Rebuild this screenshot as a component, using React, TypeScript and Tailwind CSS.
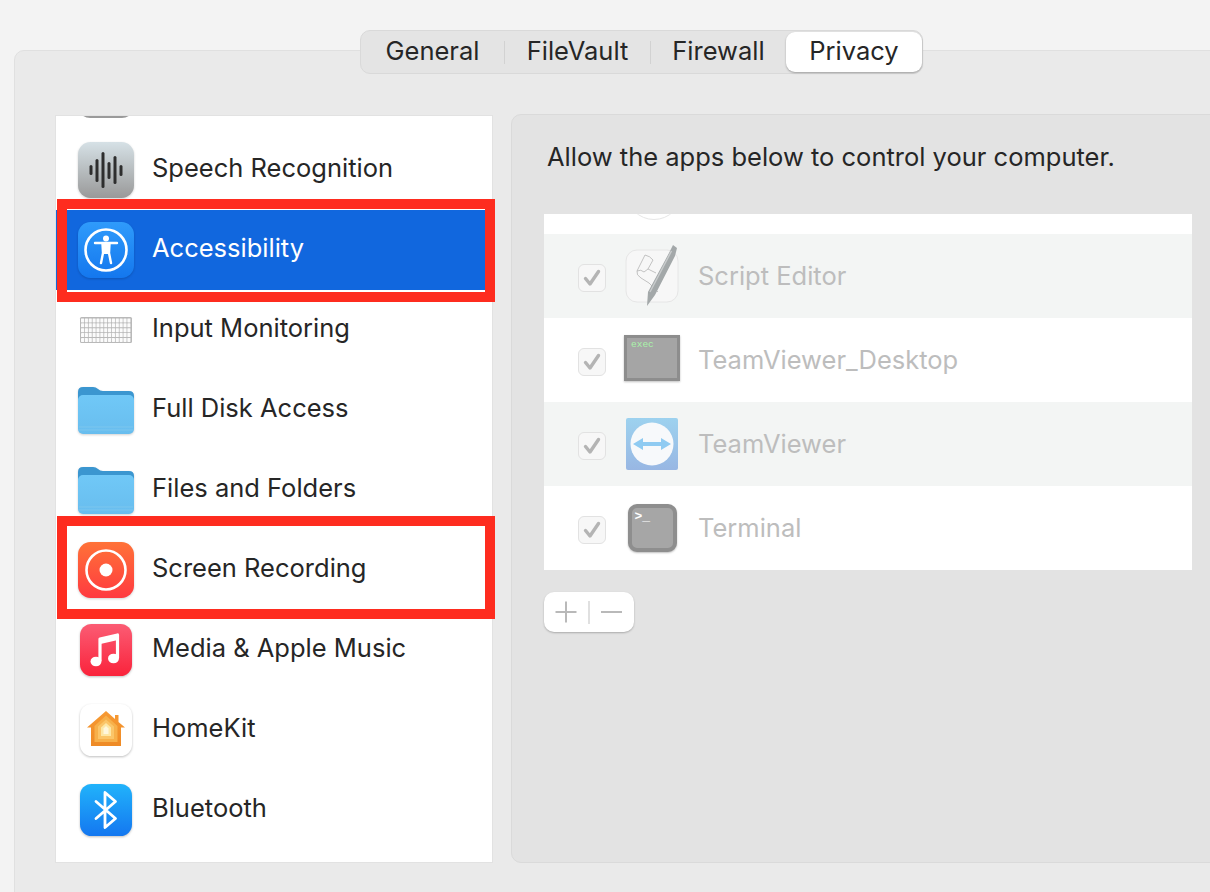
import type { ReactNode } from "react"

function Squircle({ id, from, to, children }: { id: string; from: string; to: string; children?: ReactNode }) {
  return (
    <svg width="56" height="56" viewBox="0 0 56 56" className="shrink-0 drop-shadow-[0_1px_1px_rgba(0,0,0,0.18)]">
      <defs>
        <linearGradient id={id} x1="0" y1="0" x2="0" y2="1">
          <stop offset="0" stopColor={from} />
          <stop offset="1" stopColor={to} />
        </linearGradient>
      </defs>
      <rect width="56" height="56" rx="12.5" fill={`url(#${id})`} />
      {children}
    </svg>
  )
}

function SpeechIcon() {
  const bars = [
    [12, 23, 10],
    [18, 17, 23],
    [24, 10, 36],
    [30, 20, 17],
    [36, 14, 28],
    [42, 23, 11],
  ]
  return (
    <Squircle id="speech" from="#d6e1e6" to="#999999">
      {bars.map(([x, y, h]) => (
        <rect key={x} x={x - 0.5} y={y} width="3" height={h} rx="1.5" fill="#2e2e2e" />
      ))}
    </Squircle>
  )
}

function AccessibilityIcon() {
  return (
    <Squircle id="access" from="#2f9bfb" to="#1477ee">
      <circle cx="28" cy="28" r="20.5" fill="none" stroke="#fff" strokeWidth="2.6" />
      <circle cx="28" cy="16.5" r="3" fill="#fff" />
      <path d="M17 21 L39 21 M24.5 22 L25 31 L23 41 M31.5 22 L31 31 L33 41" fill="none" stroke="#fff" strokeWidth="2.4" strokeLinecap="round" strokeLinejoin="round" />
      <path d="M24.5 22 H31.5 V32 H24.5 Z" fill="#fff" />
    </Squircle>
  )
}

function KeyboardIcon() {
  const rows = [0, 1, 2, 3, 4]
  const cols = Array.from({ length: 13 }, (_, i) => i)
  return (
    <svg width="56" height="56" viewBox="0 0 56 56" className="shrink-0">
      <rect x="2" y="15" width="52" height="26" rx="1.5" fill="#b9b9b9" />
      {rows.map((r) =>
        cols.map((c) => (
          <rect key={`${r}-${c}`} x={3 + c * 3.86} y={16.4 + r * 4.9} width="3.1" height="4" rx="0.4" fill="#fbfbfb" />
        ))
      )}
    </svg>
  )
}

function FolderIcon({ id }: { id: string }) {
  return (
    <svg width="56" height="56" viewBox="0 0 56 56" className="shrink-0 drop-shadow-[0_1px_1px_rgba(0,0,0,0.18)]">
      <defs>
        <linearGradient id={id} x1="0" y1="0" x2="0" y2="1">
          <stop offset="0" stopColor="#70c8f7" />
          <stop offset="1" stopColor="#68bdee" />
        </linearGradient>
      </defs>
      <path d="M0 22 V10 Q0 5 5 5 H15 Q18 5 20 7 Q22 9 25 9 H51 Q56 9 56 14 V22 Z" fill="#3b96d0" />
      <rect x="0" y="13" width="56" height="39" rx="5" fill={`url(#${id})`} />
      <path d="M1 45 H55 M1 48 H55" stroke="#7cc6ee" strokeWidth="1" />
    </svg>
  )
}

function RecordIcon() {
  return (
    <Squircle id="record" from="#ff7238" to="#ff3a40">
      <circle cx="28" cy="28" r="19.5" fill="none" stroke="#fff" strokeWidth="2.6" />
      <circle cx="28" cy="28" r="6.5" fill="#fff" />
    </Squircle>
  )
}

function MusicIcon() {
  return (
    <svg width="56" height="56" viewBox="0 0 56 56" className="shrink-0 drop-shadow-[0_1px_1px_rgba(0,0,0,0.25)]">
      <defs>
        <linearGradient id="music" x1="0" y1="0" x2="0" y2="1">
          <stop offset="0" stopColor="#fb5c74" />
          <stop offset="1" stopColor="#fa233b" />
        </linearGradient>
      </defs>
      <rect x="2" y="2" width="52" height="52" rx="11.5" fill="url(#music)" />
      <path d="M22 39 V17 L39.5 13 V36" fill="none" stroke="#fff" strokeWidth="3.2" strokeLinejoin="round" />
      <path d="M22 20 L39.5 16" stroke="#fff" strokeWidth="4" />
      <ellipse cx="18" cy="39.5" rx="5.5" ry="4.8" fill="#fff" />
      <ellipse cx="35.5" cy="36.5" rx="5.5" ry="4.8" fill="#fff" />
    </svg>
  )
}

function HomeIcon() {
  return (
    <svg width="56" height="56" viewBox="0 0 56 56" className="shrink-0 drop-shadow-[0_1px_1px_rgba(0,0,0,0.25)]">
      <defs>
        <linearGradient id="roof" x1="0" y1="0" x2="0" y2="1">
          <stop offset="0" stopColor="#f79a33" />
          <stop offset="1" stopColor="#ee8a25" />
        </linearGradient>
      </defs>
      <rect x="2" y="2" width="52" height="52" rx="11.5" fill="#fff" />
      <path d="M28 9 L37 17 V13 H40.5 V20 L47 25.5 H43 V44 H13 V25.5 H9 Z" fill="url(#roof)" />
      <path d="M28 13.5 L39.5 24 V40 H16.5 V24 Z" fill="#f7b04a" />
      <path d="M28 17.5 L36 24.5 V37 H20 V24.5 Z" fill="#fbc568" />
      <path d="M28 21 L33 25.5 V34 H23 V25.5 Z" fill="#fde7a6" />
      <path d="M28 24 L30.5 26.5 V32 H25.5 V26.5 Z" fill="#fff7dc" />
    </svg>
  )
}

function BluetoothIcon() {
  return (
    <svg width="56" height="56" viewBox="0 0 56 56" className="shrink-0 drop-shadow-[0_1px_1px_rgba(0,0,0,0.25)]">
      <defs>
        <linearGradient id="bt" x1="0" y1="0" x2="0" y2="1">
          <stop offset="0" stopColor="#21b3fb" />
          <stop offset="1" stopColor="#1477f0" />
        </linearGradient>
      </defs>
      <rect x="2" y="2" width="52" height="52" rx="11.5" fill="url(#bt)" />
      <path d="M18 19.5 L37.5 36.5 L27 45.5 V10.5 L37.5 19.5 L18 36.5" fill="none" stroke="#fff" strokeWidth="2.8" strokeLinecap="round" strokeLinejoin="round" />
    </svg>
  )
}

const services: { name: string; icon: ReactNode; selected?: boolean }[] = [
  { name: "Speech Recognition", icon: <SpeechIcon /> },
  { name: "Accessibility", icon: <AccessibilityIcon />, selected: true },
  { name: "Input Monitoring", icon: <KeyboardIcon /> },
  { name: "Full Disk Access", icon: <FolderIcon id="folder-a" /> },
  { name: "Files and Folders", icon: <FolderIcon id="folder-b" /> },
  { name: "Screen Recording", icon: <RecordIcon /> },
  { name: "Media & Apple Music", icon: <MusicIcon /> },
  { name: "HomeKit", icon: <HomeIcon /> },
  { name: "Bluetooth", icon: <BluetoothIcon /> },
]

function ScriptEditorIcon() {
  return (
    <svg width="56" height="64" viewBox="0 0 56 64" className="shrink-0">
      <rect x="2" y="6" width="52" height="52" rx="11" fill="#f7f7f7" stroke="#e6e6e6" />
      <path d="M21 11 L13 27 Q12 31 17 34 L25 39 L34 48 M21 11 Q26 12 29 16 L24 25 M13 27 Q17 25 20 28 L24 25 L32 29" fill="none" stroke="#b4b4b4" strokeWidth="0.8" />
      <path d="M49 1 L53 4 L51 12 L31 51 L23 62 L24 48 L45 9 Z" fill="#a3a8a9" />
      <path d="M47.5 7 L26 48" fill="none" stroke="#c9cccd" strokeWidth="1.4" />
    </svg>
  )
}

function ExecIcon() {
  return (
    <div className="-mt-[4px] h-[46px] w-[56px] shrink-0 border-[3px] border-[#8d8d8d] bg-[#a5a5a5] pl-[4px] font-['Liberation_Mono',monospace] text-[9.5px] leading-[13px] text-[#a9f5a9] shadow-[0_1px_2px_rgba(0,0,0,0.25)]">
      exec
    </div>
  )
}

function TeamViewerIcon() {
  return (
    <svg width="52" height="52" viewBox="0 0 52 52" className="shrink-0">
      <defs>
        <linearGradient id="tv" x1="0" y1="0" x2="0" y2="1">
          <stop offset="0" stopColor="#9dd2ef" />
          <stop offset="1" stopColor="#98b7e3" />
        </linearGradient>
      </defs>
      <rect width="52" height="52" rx="2" fill="url(#tv)" />
      <circle cx="26" cy="26" r="21.5" fill="#f7f9fb" />
      <path d="M7 26 L17 20 V24 H35 V20 L45 26 L35 32 V28 H17 V32 Z" fill="#8fcbf2" />
    </svg>
  )
}

function TerminalIcon() {
  return (
    <div className="flex h-[48px] w-[49px] shrink-0 items-start rounded-[9px] border-[4px] border-[#8e8e8e] bg-[#a6a6a6] pl-[3px] font-['Liberation_Mono',monospace] text-[13px] font-bold leading-[17px] text-white shadow-[0_1px_2px_rgba(0,0,0,0.25)]">
      &gt;_
    </div>
  )
}

const apps: { name: string; icon: ReactNode; striped: boolean }[] = [
  { name: "Script Editor", icon: <ScriptEditorIcon />, striped: true },
  { name: "TeamViewer_Desktop", icon: <ExecIcon />, striped: false },
  { name: "TeamViewer", icon: <TeamViewerIcon />, striped: true },
  { name: "Terminal", icon: <TerminalIcon />, striped: false },
]

function AppCheckbox() {
  return (
    <div className="mt-[4px] flex h-[28px] w-[28px] shrink-0 items-center justify-center rounded-[6px] border border-[#e2e2e2] bg-[#f7f7f7]">
      <svg width="20" height="20" viewBox="0 0 20 20">
        <path d="M3.5 10.5 L8 16 L16.5 3.5" fill="none" stroke="#b4b4b4" strokeWidth="3.4" strokeLinecap="round" strokeLinejoin="round" />
      </svg>
    </div>
  )
}

export default function App() {
  return (
    <div className="relative h-[892px] w-[1210px] overflow-hidden bg-[#f3f3f3] pl-[14px] pt-[50px] font-['Inter',sans-serif] text-[#262626]">
      <div className="h-[900px] w-[1300px] rounded-tl-[10px] border border-[#e0e0e0] bg-[#eaeaea]">
        {/* Tabs */}
        <div className="-mt-[21px] ml-[345px] flex h-[44px] w-[563px] items-center rounded-[10px] border border-[#d9d9d9] bg-[#e4e4e4] text-[25.5px]">
          <div className="-mt-[2px] w-[143px] text-center">General</div>
          <div className="h-[23px] w-[1px] bg-[#d2d2d2]" />
          <div className="-mt-[2px] w-[145px] text-center">FileVault</div>
          <div className="h-[23px] w-[1px] bg-[#d2d2d2]" />
          <div className="-mt-[2px] w-[135px] text-center">Firewall</div>
          <div className="flex h-[40px] w-[136px] items-center justify-center rounded-[9px] bg-white pb-[2px] shadow-[0_1px_2px_rgba(0,0,0,0.3)]">
            Privacy
          </div>
        </div>

        <div className="ml-[41px] mt-[41px] flex items-start">
          {/* Service list */}
          <div className="mt-[1px] h-[746px] w-[436px] shrink-0 overflow-hidden bg-white shadow-[0_0_0_1px_#e2e2e2]">
            <div className="-mt-[66px] flex h-[80px] items-center pl-[22px]">
              <div className="h-[56px] w-[56px] rounded-[12px] bg-[#9a9a9a]" />
            </div>
            {services.map((s) => (
              <div
                key={s.name}
                className={`flex h-[80px] items-center gap-[18px] pl-[22px] text-[25.5px] ${s.selected ? "bg-[#1167de] text-white" : ""}`}
              >
                {s.icon}
                <span className="-mt-[4px] whitespace-nowrap">{s.name}</span>
              </div>
            ))}
          </div>

          {/* Detail panel */}
          <div className="-mt-[1px] ml-[19px] h-[749px] w-[760px] shrink-0 rounded-l-[10px] border border-[#dadada] bg-[#e3e3e3] pl-[32px]">
            <div className="pl-[3px] pt-[26px] text-[25.5px] leading-[32px]">Allow the apps below to control your computer.</div>
            <div className="mt-[41px] h-[356px] w-[648px] overflow-hidden bg-white">
              <div className="-mt-[64px] flex h-[84px] items-center pl-[82px]">
                <div className="h-[56px] w-[56px] rounded-full border border-[#e6e6e6] bg-white" />
              </div>
              {apps.map((a) => (
                <div
                  key={a.name}
                  className={`flex h-[84px] items-center pl-[34px] text-[25.5px] text-[#bdbdbd] ${a.striped ? "bg-[#f3f5f4]" : "bg-white"}`}
                >
                  <AppCheckbox />
                  <div className="ml-[18px] flex w-[56px] justify-center">{a.icon}</div>
                  <span className="ml-[18px] whitespace-nowrap">{a.name}</span>
                </div>
              ))}
            </div>
            <div className="mt-[22px] flex h-[40px] w-[90px] items-center rounded-[10px] bg-white pl-[11px] shadow-[0_1px_2px_rgba(0,0,0,0.25)]">
              <svg width="70" height="24" viewBox="0 0 70 24">
                <path d="M11 1.5 V22.5 M0.5 12 H21.5" stroke="#b9b9b9" strokeWidth="2" fill="none" />
                <path d="M34 1 V24" stroke="#d6d6d6" strokeWidth="1.5" />
                <path d="M46 12 H67" stroke="#b9b9b9" strokeWidth="2" />
              </svg>
            </div>
          </div>
        </div>
      </div>

      {/* Red highlight boxes drawn over the screenshot */}
      <div className="absolute left-[57px] top-[199px] h-[103px] w-[438px] border-[10px] border-[#fe2c1f]" />
      <div className="absolute left-[57px] top-[516px] h-[103px] w-[438px] border-[10px] border-[#fe2c1f]" />
    </div>
  )
}
